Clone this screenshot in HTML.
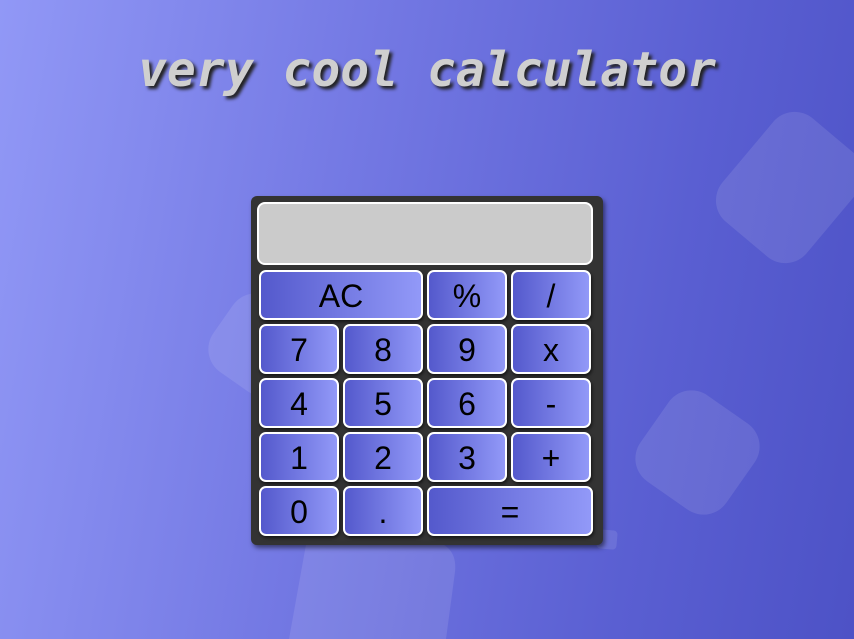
<!DOCTYPE html>
<html><head><style>
html,body{margin:0;padding:0}
#f{position:relative;width:854px;height:639px;overflow:hidden;background:linear-gradient(100deg,#9198f6 0%,#7378e3 40%,#5a5fd2 75%,#4d52c6 100%);font-family:"Liberation Sans",sans-serif}
.sq{position:absolute;background:rgba(255,255,255,0.1);border-radius:28px}
h1{position:absolute;top:42px;left:0;width:854px;margin:0;text-align:center;font-family:"DejaVu Sans Mono",monospace;font-weight:bold;font-style:italic;font-size:48px;color:#cfcfcf;text-shadow:3px 3px 3px #222;letter-spacing:0;white-space:nowrap}
.calc{position:absolute;left:251px;top:196px;width:352px;height:349px;background:#333;border-radius:6px;box-shadow:2px 3px 5px rgba(0,0,0,0.5)}
.disp{position:absolute;left:6px;top:6px;width:332px;height:59px;background:#cbcbcb;border:2px solid #fff;border-radius:8px}
.b{position:absolute;width:76px;height:46px;border:2px solid #fff;border-radius:7px;background:linear-gradient(90deg,#5459cc,#9299f8);box-shadow:1px 2px 3px rgba(0,0,0,0.6);font-size:32px;line-height:48px;text-align:center;color:#000}
</style></head><body><div id="f">
<div class="sq" style="left:735px;top:120px;width:110px;height:135px;transform:rotate(40deg)"></div>
<div class="sq" style="left:645px;top:400px;width:105px;height:105px;transform:rotate(35deg)"></div>
<svg width="854" height="639" style="position:absolute;left:0;top:0"><path d="M335 525 L430 540 Q458 545 455 572 L446 639 L289 639 L305 550 Q310 521 335 525 Z" fill="rgba(255,255,255,0.1)"/></svg>
<div class="sq" style="left:215px;top:300px;width:90px;height:90px;transform:rotate(35deg)"></div>
<div class="sq" style="left:597px;top:530px;width:20px;height:19px;border-radius:4px;transform:rotate(5deg)"></div>
<h1>very cool calculator</h1>
<div class="calc">
<div class="disp"></div>
<div class="b" style="left:8px;top:74px;width:160px">AC</div>
<div class="b" style="left:176px;top:74px">%</div>
<div class="b" style="left:260px;top:74px">/</div>
<div class="b" style="left:8px;top:128px">7</div>
<div class="b" style="left:92px;top:128px">8</div>
<div class="b" style="left:176px;top:128px">9</div>
<div class="b" style="left:260px;top:128px">x</div>
<div class="b" style="left:8px;top:182px">4</div>
<div class="b" style="left:92px;top:182px">5</div>
<div class="b" style="left:176px;top:182px">6</div>
<div class="b" style="left:260px;top:182px">-</div>
<div class="b" style="left:8px;top:236px">1</div>
<div class="b" style="left:92px;top:236px">2</div>
<div class="b" style="left:176px;top:236px">3</div>
<div class="b" style="left:260px;top:236px">+</div>
<div class="b" style="left:8px;top:290px">0</div>
<div class="b" style="left:92px;top:290px">.</div>
<div class="b" style="left:176px;top:290px;width:162px">=</div>
</div>
</div></body></html>
